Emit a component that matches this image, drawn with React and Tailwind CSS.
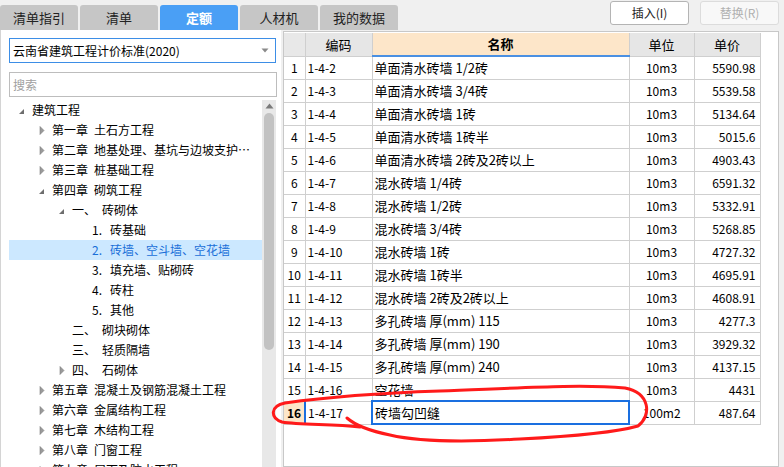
import React from "react";

const tabs = [
    { label: "清单指引" },
    { label: "清单" },
    { label: "定额", active: true },
    { label: "人材机" },
    { label: "我的数据" },
];

const tree = [
    { level: 0, tri: "open", a: "建筑工程" },
    { level: 1, tri: "closed", a: "第一章", b: "土石方工程" },
    { level: 1, tri: "closed", a: "第二章", b: "地基处理、基坑与边坡支护…" },
    { level: 1, tri: "closed", a: "第三章", b: "桩基础工程" },
    { level: 1, tri: "open", a: "第四章", b: "砌筑工程" },
    { level: 2, tri: "open", a: "一、", b: "砖砌体" },
    { level: 3, a: "1.", b: "砖基础" },
    { level: 3, a: "2.", b: "砖墙、空斗墙、空花墙", selected: true },
    { level: 3, a: "3.", b: "填充墙、贴砌砖" },
    { level: 3, a: "4.", b: "砖柱" },
    { level: 3, a: "5.", b: "其他" },
    { level: 2, a: "二、", b: "砌块砌体" },
    { level: 2, a: "三、", b: "轻质隔墙" },
    { level: 2, tri: "closed", a: "四、", b: "石砌体" },
    { level: 1, tri: "closed", a: "第五章", b: "混凝土及钢筋混凝土工程" },
    { level: 1, tri: "closed", a: "第六章", b: "金属结构工程" },
    { level: 1, tri: "closed", a: "第七章", b: "木结构工程" },
    { level: 1, tri: "closed", a: "第八章", b: "门窗工程" },
    { level: 1, tri: "closed", a: "第九章", b: "屋面及防水工程" },
];

const rows = [
    ["1-4-2", "单面清水砖墙 1/2砖", "10m3", "5590.98"],
    ["1-4-3", "单面清水砖墙 3/4砖", "10m3", "5539.58"],
    ["1-4-4", "单面清水砖墙 1砖", "10m3", "5134.64"],
    ["1-4-5", "单面清水砖墙 1砖半", "10m3", "5015.6"],
    ["1-4-6", "单面清水砖墙 2砖及2砖以上", "10m3", "4903.43"],
    ["1-4-7", "混水砖墙 1/4砖", "10m3", "6591.32"],
    ["1-4-8", "混水砖墙 1/2砖", "10m3", "5332.91"],
    ["1-4-9", "混水砖墙 3/4砖", "10m3", "5268.85"],
    ["1-4-10", "混水砖墙 1砖", "10m3", "4727.32"],
    ["1-4-11", "混水砖墙 1砖半", "10m3", "4695.91"],
    ["1-4-12", "混水砖墙 2砖及2砖以上", "10m3", "4608.91"],
    ["1-4-13", "多孔砖墙 厚(mm) 115", "10m3", "4277.3"],
    ["1-4-14", "多孔砖墙 厚(mm) 190", "10m3", "3929.32"],
    ["1-4-15", "多孔砖墙 厚(mm) 240", "10m3", "4137.15"],
    ["1-4-16", "空花墙", "10m3", "4431"],
    ["1-4-17", "砖墙勾凹缝", "100m2", "487.64"],
];

const levelPad = ["pl-[8px]", "pl-[28px]", "pl-[48px]", "pl-[68px]"];

const Tri = ({ kind }) => {
    if (kind === "open") {
        return (
            <svg width="7" height="7" viewBox="0 0 7 7" className="ml-[1px] mt-[3px]">
                <path d="M6 1 L6 6 L1 6 Z" fill="#6e6e6e" />
            </svg>
        );
    }
    if (kind === "closed") {
        return (
            <svg width="6" height="9" viewBox="0 0 6 9" className="ml-[2px]">
                <path d="M1 0.5 L5 4.5 L1 8.5 Z" fill="#9a9a9a" stroke="#7c7c7c" strokeWidth="0.6" />
            </svg>
        );
    }
    return null;
};

const TreeRow = ({ item }) => (
    <div className={"h-[20px] flex items-center whitespace-nowrap " + levelPad[item.level] + (item.selected ? " bg-[#cce8ff] text-[#1a6fd8]" : " text-black")}>
        <div className="w-[15px] flex items-center">
            <Tri kind={item.tri} />
        </div>
        {item.level === 3 ? (
            <>
                <span className="w-[18px]">{item.a}</span>
                <span>{item.b}</span>
            </>
        ) : (
            <>
                <span>{item.a}</span>
                {item.b && <span className="ml-[6px]">{item.b}</span>}
            </>
        )}
    </div>
);

const App = () => {
    return (
        <div className="w-[784px] h-[467px] bg-[#f0f0f0] relative overflow-hidden flex flex-col text-[12px]" style={{ fontFamily: '"Noto Sans CJK SC", "Noto Sans", sans-serif' }}>
            {/* top bar */}
            <div className="h-[30px] flex shrink-0">
                <div className="flex gap-[2px] pt-[5px]">
                    {tabs.map((t) => (
                        <div key={t.label} className={"w-[78px] h-[25px] rounded-t-[3px] flex items-center justify-center text-[13px] " + (t.active ? "bg-[#4a9ff5] text-white font-bold" : "bg-[#c6c6c6] text-[#222]")}>
                            {t.label}
                        </div>
                    ))}
                </div>
                <div className="ml-auto flex gap-[11px] pt-[1px] pr-[5px]">
                    <button className="w-[79px] h-[24px] bg-white border border-[#b4b4b4] rounded-[3px] text-[12px] text-[#222]">插入(I)</button>
                    <button className="w-[79px] h-[24px] bg-[#f8f8f8] border border-[#dcdcdc] rounded-[3px] text-[12px] text-[#b0b0b0]">替换(R)</button>
                </div>
            </div>

            <div className="flex flex-1 min-h-0">
                {/* left panel */}
                <div className="w-[281px] bg-white border-l border-[#d4d4d4] flex flex-col">
                    <div className="mt-[8px] ml-[8px] w-[267px] h-[25px] border border-[#3d8ee6] flex items-center pl-[3px] pr-[6px]">
                        <span className="flex-1">云南省建筑工程计价标准(2020)</span>
                        <svg width="8" height="5" viewBox="0 0 8 5">
                            <path d="M0.5 0.5 L7.5 0.5 L4 4.5 Z" fill="#8a8a8a" />
                        </svg>
                    </div>
                    <div className="mt-[9px] ml-[8px] w-[268px] h-[25px] border border-[#bdbdbd] flex items-center pl-[3px] text-[#a0a0a0]">搜索</div>
                    <div className="flex flex-1 min-h-0 mt-[3px] ml-[8px]">
                        <div className="w-[253px] overflow-hidden">
                            {tree.map((item, i) => (
                                <TreeRow key={i} item={item} />
                            ))}
                        </div>
                        <div className="w-[14px] bg-[#e8e8e8] flex flex-col items-center">
                            <svg width="9" height="6" viewBox="0 0 9 6" className="mt-[3px]">
                                <path d="M0.5 5.5 L4.5 0.5 L8.5 5.5 Z" fill="#7a7a7a" />
                            </svg>
                            <div className="w-[10px] h-[237px] mt-[4px] rounded-full bg-[#c2c2c2]" />
                        </div>
                    </div>
                </div>

                {/* right panel */}
                <div className="ml-[2px] mt-[1px] w-[496px] bg-white border border-[#c8c8c8] pt-[1px]">
                    <table className="border-collapse text-[13px] text-black table-fixed" style={{ fontFamily: '"Noto Sans CJK SC", sans-serif' }}>
                        <thead>
                            <tr className="h-[23px]">
                                <th className="w-[21px] bg-[#e8e8e8] border border-[#cfcfcf] border-l-0 border-t-0 font-normal"></th>
                                <th className="w-[67px] bg-[#e6e6e6] border border-[#cfcfcf] border-t-0 font-normal">编码</th>
                                <th className="w-[257px] bg-[#fde6c9] border-r border-[#cfcfcf] border-b-2 border-b-[#4a90e2] font-bold">名称</th>
                                <th className="w-[65px] bg-[#e6e6e6] border border-[#cfcfcf] border-t-0 font-normal">单位</th>
                                <th className="w-[66px] bg-[#e6e6e6] border border-[#cfcfcf] border-t-0 font-normal">单价</th>
                            </tr>
                        </thead>
                        <tbody>
                            {rows.map((r, i) => {
                                const sel = i === 15;
                                return (
                                    <tr key={i} className="h-[23px]">
                                        <td className={"border border-[#cfcfcf] border-l-0 text-center text-[12px] p-0 " + (sel ? "bg-[#fde6c9] font-bold border-r-2 border-r-[#1a6fe0]" : "")}>{i + 1}</td>
                                        <td className="border border-[#cfcfcf] pl-[2px] text-[12px] align-top pt-[2px]">{r[0]}</td>
                                        <td className={"pl-[2px] whitespace-nowrap " + (sel ? "border-2 border-[#1a6fe0]" : "border border-[#cfcfcf]")}>{r[1]}</td>
                                        <td className="border border-[#cfcfcf] text-center text-[12px]">{r[2]}</td>
                                        <td className="border border-[#cfcfcf] text-right pr-[4px] text-[12px]">{r[3]}</td>
                                    </tr>
                                );
                            })}
                        </tbody>
                    </table>
                </div>
            </div>

            {/* hand-drawn annotation */}
            <svg className="absolute inset-0 pointer-events-none" width="784" height="467" viewBox="0 0 784 467">
                <path
                    d="M360 427 C330 424, 300 425, 282 422 C270 418, 270 406, 285 403 C320 398, 380 393, 440 391 C520 388, 580 384, 625 388 C650 393, 652 415, 638 426 C610 434, 560 437, 520 439 C470 442, 420 442, 390 435 C370 431, 355 425, 347 418"
                    fill="none"
                    stroke="#ff1a1a"
                    strokeWidth="3"
                    strokeLinecap="round"
                />
            </svg>
        </div>
    );
};

export default App;
